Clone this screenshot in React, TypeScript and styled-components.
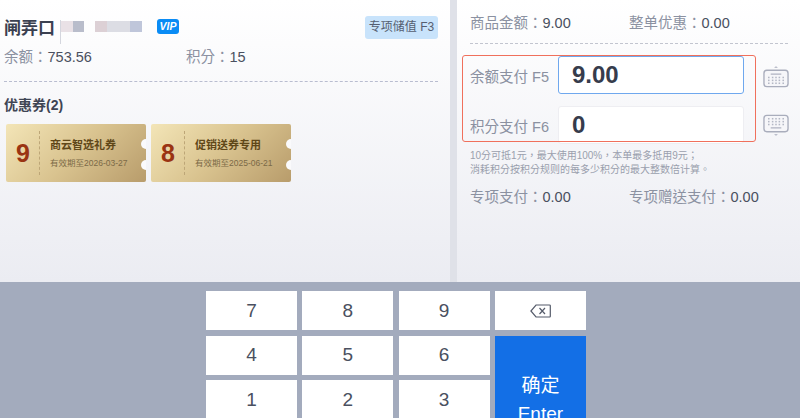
import React from 'react';
import styled, { createGlobalStyle } from 'styled-components';

const GlobalStyle = createGlobalStyle`
	html, body {
		margin: 0;
		padding: 0;
		background: #fff;
	}
	body {
		font-family: "Liberation Sans", "Noto Sans CJK TC", sans-serif;
	}
	* {
		box-sizing: border-box;
	}
`;

const Page = styled.div`
	width: 800px;
	height: 418px;
	overflow: hidden;
	display: flex;
	flex-direction: column;
`;

const Top = styled.div`
	height: 282px;
	flex: none;
	display: flex;
	background: #dfe1e8;
	gap: 7px;
`;

const Panel = styled.div`
	background: linear-gradient(180deg, #ffffff 0%, #ebecf2 100%);
`;

const LeftPanel = styled(Panel)`
	width: 450px;
	flex: none;
	padding: 16px 12px 0 4px;
`;

const RightPanel = styled(Panel)`
	flex: 1;
	min-width: 0;
	padding: 13px 12px 0 13px;
`;

const MemberRow = styled.div`
	height: 31px;
	display: flex;
	align-items: flex-start;
`;

const MemberName = styled.div`
	font-size: 17px;
	line-height: 26px;
	font-weight: 700;
	color: #3a4050;
`;

const Cursor = styled.div`
	width: 1px;
	height: 24px;
	margin: 4px 0 0 5px;
	background: #d4d6de;
`;

const Mosaic = styled.div<{ $ml: number }>`
	display: flex;
	margin: 5px 0 0 ${({ $ml }) => $ml}px;
`;

const Tile = styled.div<{ $c: string; $w: number }>`
	height: 11px;
	width: ${({ $w }) => $w}px;
	background: ${({ $c }) => $c};
`;

const VipBadge = styled.div`
	margin: 3px 0 0 15px;
	flex: none;
	width: 22px;
	height: 15px;
	border-radius: 3px;
	background: #0a8cf5;
	color: #fff;
	font-size: 10.5px;
	line-height: 15px;
	font-weight: 700;
	font-style: italic;
	text-align: center;
`;

const StoreButton = styled.div`
	margin-left: auto;
	width: 73px;
	height: 23px;
	border-radius: 3px;
	background: #c8e3fb;
	color: #555e70;
	font-size: 12px;
	line-height: 23px;
	text-align: center;
	white-space: nowrap;
`;

const InfoRow = styled.div`
	display: flex;
	font-size: 14.5px;
	line-height: 20px;
	color: #8b91a1;
`;

const InfoItem = styled.div<{ $w: number }>`
	width: ${({ $w }) => $w}px;
	flex: none;
	white-space: nowrap;
`;

const Value = styled.span`
	color: #4a5060;
`;

const Dashed = styled.div`
	border-top: 1px dashed #b9bdd0;
`;

const LeftDashed = styled(Dashed)`
	margin-top: 14px;
`;

const CouponTitle = styled.div`
	margin-top: 13px;
	font-size: 14px;
	line-height: 20px;
	font-weight: 700;
	color: #3f4554;
`;

const CouponList = styled.div`
	display: flex;
	gap: 5px;
	margin: 9px 0 0 2px;
`;

const Coupon = styled.div`
	position: relative;
	width: 140px;
	height: 58px;
	border-radius: 2px;
	background: linear-gradient(135deg, #f3e5b7 0%, #d9c38f 50%, #b89c6b 100%);
	display: flex;
	align-items: center;
	padding: 7px 0;
	overflow: hidden;
	&::before,
	&::after {
		content: '';
		position: absolute;
		right: -5px;
		width: 10px;
		height: 10px;
		border-radius: 50%;
		background: #fafafc;
	}
	&::before {
		top: 15px;
	}
	&::after {
		top: 36px;
	}
`;

const CouponAmount = styled.div`
	width: 33px;
	padding-left: 1px;
	flex: none;
	text-align: center;
	font-size: 25px;
	font-weight: 700;
	color: #9a3412;
`;

const CouponBody = styled.div`
	height: 100%;
	border-left: 1px dashed #bda677;
	padding-left: 10px;
	display: flex;
	flex-direction: column;
	justify-content: center;
	gap: 4px;
	white-space: nowrap;
`;

const CouponName = styled.div`
	font-size: 11px;
	line-height: 16px;
	font-weight: 700;
	color: #5f4718;
`;

const CouponDate = styled.div`
	font-size: 8.5px;
	line-height: 12px;
	color: #7b6a47;
`;

const RightDashed = styled(Dashed)`
	margin-top: 10px;
	border-top-color: #c2c5cf;
`;

const PayArea = styled.div`
	display: flex;
	margin: 11px 0 0 -8px;
`;

const PayBox = styled.div`
	position: relative;
	width: 294px;
	height: 87px;
	padding: 1px 12px 0 8px;
	flex: none;
	display: flex;
	flex-direction: column;
	gap: 12px;
	&::after {
		content: '';
		position: absolute;
		inset: 0;
		border: 1px solid #f0705c;
		border-radius: 3px;
		pointer-events: none;
	}
`;

const PayRow = styled.div`
	display: flex;
	align-items: center;
	justify-content: space-between;
`;

const PayLabel = styled.div`
	font-size: 14.5px;
	color: #8b91a1;
	white-space: nowrap;
`;

const PayInput = styled.div<{ $active?: boolean }>`
	width: 186px;
	height: 38px;
	background: #fff;
	border: 1px solid ${({ $active }) => ($active ? '#6fa8ee' : '#eeeef2')};
	border-radius: 3px;
	padding-left: 13px;
	font-size: 24px;
	font-weight: 700;
	line-height: 35px;
	color: #363c4c;
`;

const KeyboardColumn = styled.div`
	margin: 10px 0 0 7px;
	display: flex;
	flex-direction: column;
	gap: 24px;
`;

const Hint = styled.div`
	margin-top: 7px;
	font-size: 10px;
	line-height: 14px;
	color: #9a9fad;
	white-space: nowrap;
`;

const BottomRow = styled(InfoRow)`
	margin-top: 10px;
`;

const Keypad = styled.div`
	flex: 1;
	background: #a3abbd;
	display: grid;
	grid-template-columns: repeat(4, 91px);
	grid-auto-rows: 39px;
	gap: 5.5px 5.3px;
	padding: 9px 0 0 206px;
`;

const Key = styled.div`
	background: #fff;
	color: #4a5060;
	font-size: 19px;
	display: flex;
	align-items: center;
	justify-content: center;
`;

const EnterKey = styled.div`
	grid-column: 4;
	grid-row: 2 / span 3;
	background: #136fe6;
	color: #fff;
	font-size: 19px;
	line-height: 28px;
	text-align: center;
	padding-top: 36px;
`;

const KeyboardIcon = ({ flip }: { flip?: boolean }) => (
	<svg width="26" height="24" viewBox="0 0 27 24" fill="none" style={flip ? { transform: 'scaleY(-1)' } : undefined}>
		<path d="M11.5 2.5h4L13.5 0.8z" fill="#a9adbc" />
		<rect x="1" y="5" width="25" height="17" rx="3" stroke="#a9adbc" strokeWidth="1.4" fill="#f6f6f9" />
		<path d="M8 9h11" stroke="#a9adbc" strokeWidth="1.2" />
		{[12.5, 15.5, 18.5].map((y) =>
			[6, 10, 13.5, 17, 21].map((x) => <rect key={`${x}-${y}`} x={x - 0.8} y={y - 0.8} width="1.6" height="1.6" fill="#b4b8c5" />),
		)}
	</svg>
);

const BackspaceIcon = () => (
	<svg width="21" height="14" viewBox="0 0 21 14" fill="none" stroke="#555b6a" strokeWidth="1.2">
		<path d="M6 1h13.5a.8.8 0 0 1 .8.8v10.4a.8.8 0 0 1-.8.8H6L.9 7z" />
		<path d="M9.5 4l5.5 6M15 4l-5.5 6" />
	</svg>
);

const coupons = [
	{ amount: '9', name: '商云智选礼券', date: '有效期至2026-03-27' },
	{ amount: '8', name: '促销送券专用', date: '有效期至2025-06-21' },
];

export default function App() {
	return (
		<Page>
			<GlobalStyle />
			<Top>
				<LeftPanel>
					<MemberRow>
						<MemberName>闸弄口</MemberName>
						<Cursor />
						<Mosaic $ml={0}>
							<Tile $c="#e9e1e6" $w={12} />
							<Tile $c="#b9bdcb" $w={11} />
						</Mosaic>
						<Mosaic $ml={11}>
							<Tile $c="#dcd0d5" $w={12} />
							<Tile $c="#dcdde4" $w={23} />
							<Tile $c="#bfc6da" $w={12} />
						</Mosaic>
						<VipBadge>VIP</VipBadge>
						<StoreButton>专项储值 F3</StoreButton>
					</MemberRow>
					<InfoRow>
						<InfoItem $w={182}>
							余额：<Value>753.56</Value>
						</InfoItem>
						<InfoItem $w={100}>
							积分：<Value>15</Value>
						</InfoItem>
					</InfoRow>
					<LeftDashed />
					<CouponTitle>优惠券(2)</CouponTitle>
					<CouponList>
						{coupons.map((c) => (
							<Coupon key={c.name}>
								<CouponAmount>{c.amount}</CouponAmount>
								<CouponBody>
									<CouponName>{c.name}</CouponName>
									<CouponDate>{c.date}</CouponDate>
								</CouponBody>
							</Coupon>
						))}
					</CouponList>
				</LeftPanel>
				<RightPanel>
					<InfoRow>
						<InfoItem $w={159}>
							商品金额：<Value>9.00</Value>
						</InfoItem>
						<InfoItem $w={150}>
							整单优惠：<Value>0.00</Value>
						</InfoItem>
					</InfoRow>
					<RightDashed />
					<PayArea>
						<PayBox>
							<PayRow>
								<PayLabel>余额支付 F5</PayLabel>
								<PayInput $active>9.00</PayInput>
							</PayRow>
							<PayRow>
								<PayLabel>积分支付 F6</PayLabel>
								<PayInput>0</PayInput>
							</PayRow>
						</PayBox>
						<KeyboardColumn>
							<KeyboardIcon />
							<KeyboardIcon flip />
						</KeyboardColumn>
					</PayArea>
					<Hint>
						10分可抵1元，最大使用100%，本单最多抵用9元；
						<br />
						消耗积分按积分规则的每多少积分的最大整数倍计算。
					</Hint>
					<BottomRow>
						<InfoItem $w={159}>
							专项支付：<Value>0.00</Value>
						</InfoItem>
						<InfoItem $w={159}>
							专项赠送支付：<Value>0.00</Value>
						</InfoItem>
					</BottomRow>
				</RightPanel>
			</Top>
			<Keypad>
				<Key>7</Key>
				<Key>8</Key>
				<Key>9</Key>
				<Key>
					<BackspaceIcon />
				</Key>
				<Key>4</Key>
				<Key>5</Key>
				<Key>6</Key>
				<EnterKey>
					确定
					<br />
					Enter
				</EnterKey>
				<Key>1</Key>
				<Key>2</Key>
				<Key>3</Key>
			</Keypad>
		</Page>
	);
}
